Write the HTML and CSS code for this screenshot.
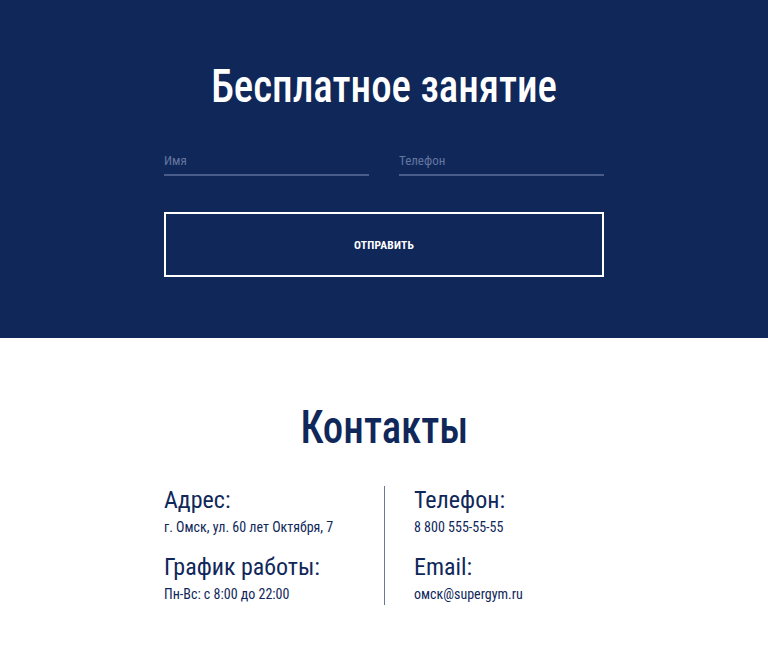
FILE: index.html
```html
<!DOCTYPE html>
<html lang="ru">
<head>
<meta charset="utf-8">
<title>Бесплатное занятие</title>
<link rel="stylesheet" href="styles.css">
</head>
<body>
<section class="promo">
  <h2 class="title title-light"><span class="title-text">Бесплатное занятие</span></h2>
  <form class="promo-form">
    <div class="fields">
      <label class="field"><input type="text" placeholder="Имя"></label>
      <label class="field"><input type="tel" placeholder="Телефон"></label>
    </div>
    <button type="button" class="submit">ОТПРАВИТЬ</button>
  </form>
</section>
<section class="contacts">
  <h2 class="title"><span class="title-text">Контакты</span></h2>
  <div class="contacts-grid">
    <div class="col col-left">
      <div class="item">
        <h3>Адрес:</h3>
        <p>г. Омск, ул. 60 лет Октября, 7</p>
      </div>
      <div class="item">
        <h3>График работы:</h3>
        <p>Пн-Вс: с 8:00 до 22:00</p>
      </div>
    </div>
    <div class="col col-right">
      <div class="item">
        <h3>Телефон:</h3>
        <p>8 800 555-55-55</p>
      </div>
      <div class="item">
        <h3>Email:</h3>
        <p>омск@supergym.ru</p>
      </div>
    </div>
  </div>
</section>
</body>
</html>
```

FILE: styles.css
```css
* { box-sizing: border-box; }
html, body { margin: 0; padding: 0; background: #fff; }
body {
  font-family: "Roboto Condensed", Roboto, "Liberation Sans", sans-serif;
  font-stretch: condensed;
  color: #10275a;
}
.title {
  margin: 0;
  text-align: center;
  font-size: 46px;
  font-weight: 500;
  line-height: 54px;
}
.title-text {
  display: inline-block;
  transform: scaleX(0.89);
}
.title-light { color: #fff; }
.promo {
  background: #10275a;
  height: 338px;
  padding-top: 59px;
}
.promo-form {
  width: 440px;
  margin: 40px auto 0;
}
.fields {
  display: grid;
  grid-template-columns: 1fr 1fr;
  column-gap: 30px;
}
.field input {
  display: block;
  width: 100%;
  background: transparent;
  border: 0;
  border-bottom: 2px solid #4a5d8a;
  padding: 0 0 5px;
  font: inherit;
  font-size: 13px;
  line-height: 16px;
  color: #fff;
  outline: none;
}
.field input::placeholder { color: #64769f; }
.submit {
  display: block;
  width: 100%;
  height: 65px;
  margin-top: 36px;
  background: transparent;
  border: 2px solid #fff;
  color: #fff;
  font: inherit;
  font-size: 11.5px;
  font-weight: 700;
  letter-spacing: 0.2px;
}
.contacts {
  padding-top: 62px;
  padding-bottom: 40px;
}
.contacts-grid {
  width: 440px;
  margin: 32px auto 0;
  display: grid;
  grid-template-columns: 220px 1fr;
}
.col { padding-bottom: 2px; }
.col-right {
  border-left: 1px solid #6a7799;
  padding-left: 29px;
}
.item h3 {
  margin: 0;
  font-size: 24px;
  font-weight: 400;
  line-height: 28px;
}
.item p {
  margin: 5px 0 0;
  font-size: 14px;
  line-height: 17px;
}
.item + .item { margin-top: 17px; }
```
